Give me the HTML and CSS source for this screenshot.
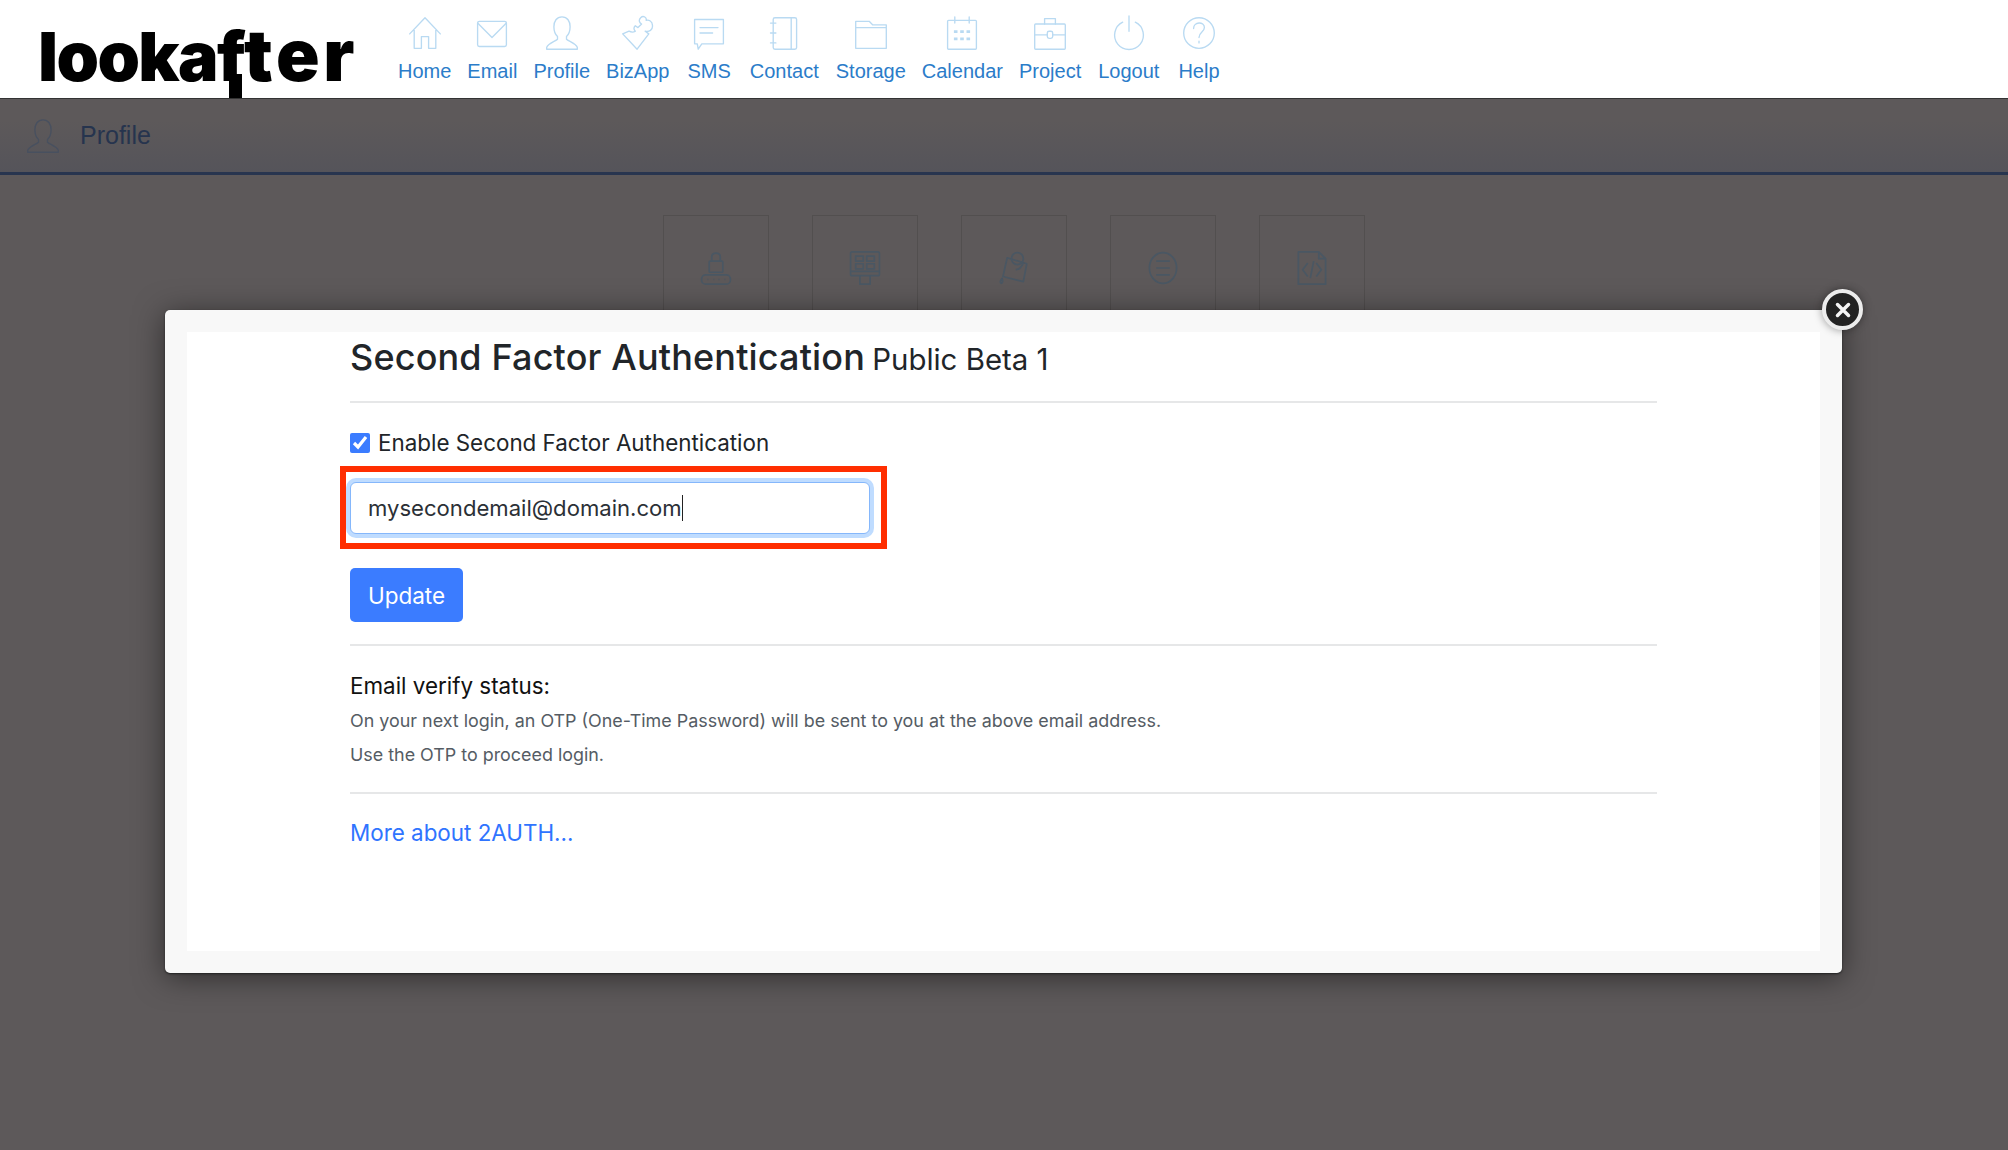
FILE: index.html
```html
<!DOCTYPE html>
<html lang="en">
<head>
<meta charset="utf-8">
<title>Profile - Second Factor Authentication</title>
<link rel="stylesheet" href="styles.css">
</head>
<body>
<header class="topbar">
  <a class="logo" href="#">lookaf<span class="logo-end">ter</span></a>
  <nav class="nav">
    <a class="nav-item" href="#"><svg class="nav-icon" viewBox="0 0 40 40"><path d="M3 21 20 3l17 18M8 17v20h8V24h8v13h8V17"/></svg><span>Home</span></a>
    <a class="nav-item" href="#"><svg class="nav-icon" viewBox="0 0 40 40"><rect x="4" y="7" width="32" height="28" rx="2"/><path d="M4 9l16 16L36 9"/></svg><span>Email</span></a>
    <a class="nav-item" href="#"><svg class="nav-icon" viewBox="0 0 40 40"><path d="M20 2c-6 0-9 5-9 11 0 5 2 9 4 11v3c-2 2-11 5-12 9v2h34v-2c-1-4-10-7-12-9v-3c2-2 4-6 4-11 0-6-3-11-9-11z"/></svg><span>Profile</span></a>
    <a class="nav-item" href="#"><svg class="nav-icon" viewBox="0 0 40 40"><path d="M3 21 19 38l13-17-4-3c4 1 9-1 8-7 0-4-4-6-7-5 1-3-3-6-6-3-3 3-1 6 1 7l-4 4-3-2c-2 2-2 4 0 6-3 2-5 1-7 0z"/></svg><span>BizApp</span></a>
    <a class="nav-item nav-item-sms" href="#"><svg class="nav-icon" viewBox="0 0 40 40"><path d="M4 5h32v27H12l-4 6-1-6H4zM10 14h20M10 20h14"/></svg><span>SMS</span></a>
    <a class="nav-item nav-item-contact" href="#"><svg class="nav-icon" viewBox="0 0 40 40"><rect x="8" y="3" width="26" height="35" rx="2"/><path d="M28 3v35M5 9h6M5 20h6M5 31h6"/></svg><span>Contact</span></a>
    <a class="nav-item nav-item-storage" href="#"><svg class="nav-icon" viewBox="0 0 40 40"><path d="M3 7h15l4 4h15v26H3zM3 14h34"/></svg><span>Storage</span></a>
    <a class="nav-item" href="#"><svg class="nav-icon" viewBox="0 0 40 40"><rect x="4" y="6" width="32" height="32" rx="1"/><path d="M12 2v7M28 2v7"/><path class="dots" d="M11 17h4v3h-4zM18 17h4v3h-4zM25 17h4v3h-4zM11 25h4v3h-4zM18 25h4v3h-4zM25 25h4v3h-4z"/></svg><span>Calendar</span></a>
    <a class="nav-item" href="#"><svg class="nav-icon" viewBox="0 0 40 40"><rect x="3" y="10" width="34" height="28" rx="1"/><path d="M14 10V4h12v6M3 22h14M23 22h14"/><rect x="17" y="18" width="6" height="8" rx="2"/></svg><span>Project</span></a>
    <a class="nav-item nav-item-logout" href="#"><svg class="nav-icon" viewBox="0 0 40 40"><path d="M20 1v17M27 8a16 16 0 1 1-14 0"/></svg><span>Logout</span></a>
    <a class="nav-item nav-item-help" href="#"><svg class="nav-icon" viewBox="0 0 40 40"><circle cx="20" cy="20" r="17"/><path d="M14 15c0-8 12-8 12-1 0 5-6 5-6 11M20 29v2"/></svg><span>Help</span></a>
  </nav>
</header>

<main class="page">
  <div class="page-title">
    <svg class="page-title-icon" viewBox="0 0 40 40"><path d="M20 2c-6 0-9 5-9 11 0 5 2 9 4 11v3c-2 2-11 5-12 9v2h34v-2c-1-4-10-7-12-9v-3c2-2 4-6 4-11 0-6-3-11-9-11z"/></svg>
    <h1>Profile</h1>
  </div>

  <div class="tiles">
    <div class="tile"><svg class="tile-icon" viewBox="0 0 40 40"><rect x="12" y="12" width="16" height="13" rx="1"/><path d="M15 12V7c0-6 10-6 10 0v5"/><rect x="3" y="28" width="34" height="11" rx="5"/><path d="M10 33.500h1M17 33.500h1M23 33.500h1M30 33.500h1"/></svg></div>
    <div class="tile"><svg class="tile-icon" viewBox="0 0 40 40"><rect x="3" y="1" width="34" height="28" rx="2"/><path d="M3 24h34M14 29v10h12V29"/><rect x="9" y="6" width="9" height="6"/><rect x="22" y="6" width="9" height="6"/><rect x="9" y="15" width="9" height="6"/><rect x="22" y="15" width="9" height="6"/></svg></div>
    <div class="tile"><svg class="tile-icon" viewBox="0 0 40 40"><path d="M12 8 35 15 31 36 7 30z"/><ellipse cx="24" cy="9" rx="7" ry="7"/><path d="M22 22c3 0 7-3 9-8M6 32c-2 3-3 5-1 6 2 0 2-3 1-6z"/></svg></div>
    <div class="tile"><svg class="tile-icon" viewBox="0 0 40 40"><ellipse cx="20" cy="20" rx="16" ry="18"/><path d="M12 12h16M12 20h16M12 28h16"/></svg></div>
    <div class="tile"><svg class="tile-icon" viewBox="0 0 40 40"><path d="M4 1h24l8 8v30H4zM28 1v8h8M15 14l-6 8 6 8M25 14l6 8-6 8M22 12l-4 20"/></svg></div>
  </div>

  <section class="modal">
    <div class="modal-body">
      <h2 class="modal-title">Second Factor Authentication <small>Public Beta 1</small></h2>
      <hr class="rule rule-title">
      <label class="check-row"><input class="check" type="checkbox" checked>Enable Second Factor Authentication</label>
      <div class="highlight">
        <div class="field" role="textbox"><span>mysecondemail@domain.com</span><i class="caret"></i></div>
      </div>
      <button class="btn" type="button">Update</button>
      <hr class="rule rule-btn">
      <p class="status-head">Email verify status:</p>
      <p class="status-text">On your next login, an OTP (One-Time Password) will be sent to you at the above email address.</p>
      <p class="status-text">Use the OTP to proceed login.</p>
      <hr class="rule rule-status">
      <a class="more" href="#">More about 2AUTH...</a>
    </div>
    <button class="close" type="button" aria-label="Close"><svg viewBox="0 0 20 20"><path d="M4.500 4.500l11 11M15.500 4.500l-11 11"/></svg></button>
  </section>
</main>
</body>
</html>
```
FILE: styles.css
```css
* { box-sizing: border-box; }
html, body { margin: 0; padding: 0; height: 100%; }
body { display: flex; flex-direction: column; height: 1150px; overflow: hidden; background: #5d595a; font-family: "Inter", "Liberation Sans", sans-serif; }

.topbar { height: 99px; flex: none; display: flex; align-items: flex-start; background: #fff; border-bottom: 1px solid #333; padding-left: 38px; }
.logo { position: relative; display: block; width: 320px; margin-top: 16px; font-family: "Inter", sans-serif; font-weight: 900; font-size: 68px; line-height: 78px; letter-spacing: -1.600px; white-space: nowrap; color: #000; text-decoration: none; }
.logo-end { font-size: 72px; letter-spacing: 3.800px; }
.logo::after { content: ""; position: absolute; left: 191px; top: 58px; width: 13px; height: 24px; background: #000; }
.nav { display: flex; gap: 16px; margin-left: 40px; padding-top: 15px; }
.nav-item { display: flex; flex-direction: column; align-items: center; color: #2b7cc9; text-decoration: none; font-family: "Liberation Sans", Arial, sans-serif; font-size: 20px; line-height: 24px; }
.nav-item-sms { margin-left: 2px; }
.nav-item-contact { margin-left: 3px; }
.nav-item-storage { margin-left: 1px; }
.nav-item-logout { margin-left: 1px; }
.nav-item-help { margin-left: 3px; }
.nav-icon { width: 36px; height: 36px; margin-bottom: 8px; fill: none; stroke: #b9daf2; stroke-width: 1.500; stroke-linejoin: round; stroke-linecap: round; }
.nav-icon .dots { fill: #b9daf2; stroke: none; }

.page { position: relative; flex: 1; min-height: 0; }
.page-title { height: 76px; display: flex; align-items: center; gap: 19px; padding: 0 0 2px 25px; border-bottom: 3px solid #28354f; background: linear-gradient(#5d595a 30%, #55545a); }
.page-title-icon { width: 36px; height: 36px; margin-top: 3px; fill: none; stroke: #48505f; stroke-width: 1.500; stroke-linejoin: round; }
.page-title h1 { margin: 0; font-family: "Liberation Sans", Arial, sans-serif; font-weight: 400; font-size: 25px; line-height: 30px; color: #26344e; }
.tiles { display: flex; justify-content: center; gap: 43px; margin: 40px 0 0 20px; }
.tile { width: 106px; height: 120px; border: 1px solid #524f4f; border-bottom: 0; padding-top: 35px; display: flex; justify-content: center; }
.tile-icon { width: 34px; height: 34px; fill: none; stroke: #4a5763; stroke-width: 2; stroke-linejoin: round; }

.modal { position: absolute; left: 165px; top: 211px; width: 1677px; height: 663px; padding: 22px; background: #f8f8f8; border-radius: 5px; box-shadow: 0 1px 2px #222, 0 4px 30px rgba(0, 0, 0, .5); }
.modal-body { height: 100%; padding: 0 163px; background: #fff; color: #212529; }
.modal-title { height: 50px; margin: 0; font-weight: 500; font-size: 36px; line-height: 50px; letter-spacing: 0.150px; white-space: nowrap; }
.modal-title small { margin-left: -2.500px; font-weight: 400; font-size: 29.400px; line-height: 1; letter-spacing: 0; }
.rule { height: 2px; margin: 0; border: 0; background: #e6e7e8; }
.rule-title { margin-top: 19px; }
.rule-btn { margin-top: 22px; }
.rule-status { margin-top: 20px; }
.check-row { display: flex; align-items: center; gap: 8px; height: 30px; margin-top: 25px; font-size: 22.400px; line-height: 30px; }
.check { width: 20px; height: 20px; margin: 0; accent-color: #3b7cff; }
.highlight { width: 547px; margin: 8px 0 0 -10px; padding: 10px 11px 9px 4px; border: 6px solid #ff2e00; }
.field { display: flex; align-items: center; height: 52px; padding: 0 17px; border: 1px solid #85b7fb; border-radius: 6px; background: #fff; box-shadow: 0 0 0 4px #bfdcff; font-size: 22.100px; color: #2b3036; }
.caret { width: 1.500px; height: 26px; background: #222; }
.btn { display: block; width: 113px; height: 54px; margin-top: 19px; padding: 0; border: 0; border-radius: 5px; background: #3b7cff; color: #fff; font: 400 22.500px "Inter", sans-serif; }
.status-head { margin: 25px 0 0; font-size: 22.400px; line-height: 30px; color: #111; }
.status-text { margin: 0; font-size: 17.900px; line-height: 34px; color: #555c64; }
.status-head + .status-text { margin-top: 3px; }
.more { display: block; margin-top: 24px; font-size: 22.400px; line-height: 30px; color: #2f74ff; text-decoration: none; }
.close { position: absolute; left: 1657px; top: -21px; width: 41px; height: 41px; padding: 0; border: 4px solid #ececec; border-radius: 50%; background: #222; display: flex; align-items: center; justify-content: center; box-shadow: 0 0 8px rgba(0, 0, 0, .4); }
.close svg { width: 20px; height: 20px; fill: none; stroke: #f4f4f4; stroke-width: 3.500; stroke-linecap: round; }
```
